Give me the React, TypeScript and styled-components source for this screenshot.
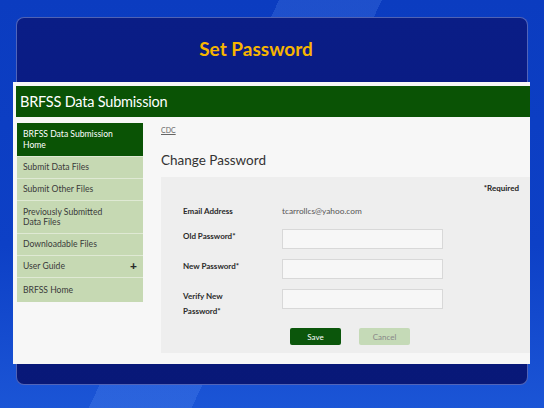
import React from "react";
import styled, { createGlobalStyle } from "styled-components";

const GlobalStyle = createGlobalStyle`
  html, body {
    margin: 0;
    padding: 0;
  }
  body {
    width: 544px;
    height: 408px;
    overflow: hidden;
    font-family: Lato, "Open Sans", "Liberation Sans", sans-serif;
  }
`;

//#region slide
const Slide = styled.div`
  width: 544px;
  height: 408px;
  box-sizing: border-box;
  padding: 17px 16px 23px;
  background:
    linear-gradient(115deg, transparent 0 38%, rgba(120, 170, 255, 0.18) 38% 52%, transparent 52%),
    linear-gradient(180deg, #0b3cc0 0%, #0d40c6 60%, #1b55d6 100%);
`;

const Panel = styled.div`
  height: 368px;
  box-sizing: border-box;
  border-radius: 8px;
  border: 1px solid rgba(140, 160, 230, 0.55);
  background: linear-gradient(180deg, #0a1d86 0%, #0a1a80 60%, #081878 100%);
  display: flex;
  flex-direction: column;
`;

const SlideTitle = styled.h1`
  margin: 0;
  height: 64px;
  display: flex;
  align-items: center;
  justify-content: center;
  padding: 0 32px 4px 0;
  box-sizing: border-box;
  color: #f7b500;
  font-size: 19px;
  font-weight: 700;
`;
//#endregion

//#region captured page
const Shot = styled.div`
  margin-left: -4px;
  margin-right: -3px;
  height: 282px;
  background: #f7f7f7;
  padding: 4px 0 0 3px;
  box-sizing: border-box;
  display: flex;
  flex-direction: column;
`;

const Header = styled.div`
  height: 31px;
  background: #0a5305;
  color: #fff;
  font-size: 14.5px;
  display: flex;
  align-items: center;
  padding-left: 4px;
  letter-spacing: -0.2px;
`;

const Body = styled.div`
  display: flex;
  gap: 18px;
  padding: 6px 0 0 1px;
  flex: 1;
`;

const Sidebar = styled.nav`
  width: 126px;
  align-self: flex-start;
  background: #c6d9b3;
`;

const NavItem = styled.div<{ $active?: boolean; $tall?: boolean }>`
  display: flex;
  justify-content: space-between;
  align-items: center;
  font-size: 8.6px;
  line-height: 10.5px;
  padding: 5px 6px;
  min-height: ${(p) => (p.$tall ? "33px" : "22px")};
  box-sizing: border-box;
  color: ${(p) => (p.$active ? "#fff" : "#3a3a3a")};
  background: ${(p) => (p.$active ? "#0a5305" : "transparent")};
  border-bottom: 1px solid #dfe9d4;
  &:first-child {
    min-height: 34px;
  }
  &:last-child {
    border-bottom: none;
    min-height: 24px;
  }
`;

const NavLabel = styled.span`
  max-width: 96px;
`;

const Plus = styled.span`
  font-size: 12px;
  font-weight: 900;
  color: #2a2a2a;
`;

const Main = styled.div`
  flex: 1;
  display: flex;
  flex-direction: column;
`;

const Crumb = styled.a`
  font-size: 7px;
  color: #666;
  text-decoration: underline;
  margin-top: 3px;
  height: 10px;
`;

const PageTitle = styled.h2`
  margin: 15px 0 0;
  font-size: 13.5px;
  font-weight: 400;
  color: #333;
  line-height: 18px;
`;

const FormBox = styled.div`
  margin-top: 8px;
  height: 176px;
  background: #eeeeee;
  display: flex;
  flex-direction: column;
  padding: 6px 11px 0 22px;
  box-sizing: border-box;
`;

const Required = styled.div`
  align-self: flex-end;
  font-size: 8px;
  font-weight: 700;
  color: #222;
  line-height: 10px;
`;

const Grid = styled.div`
  display: grid;
  grid-template-columns: 99px 161px;
  row-gap: 10px;
  align-items: start;
  margin-top: 11px;
`;

const Label = styled.div`
  font-size: 8px;
  font-weight: 700;
  color: #2a2a2a;
  line-height: 15px;
`;

const Value = styled.div`
  font-size: 8.3px;
  color: #555;
  line-height: 15px;
`;

const Input = styled.div`
  height: 20px;
  background: #f7f7f7;
  border: 1px solid #d8d8d8;
  box-sizing: border-box;
`;

const Buttons = styled.div`
  display: flex;
  gap: 18px;
  margin: 9px 0 0 107px;
`;

const Button = styled.div<{ $primary?: boolean }>`
  width: 51px;
  height: 17px;
  border-radius: 2px;
  display: flex;
  align-items: center;
  justify-content: center;
  font-size: 8px;
  background: ${(p) => (p.$primary ? "#0b560b" : "#c5dab7")};
  color: ${(p) => (p.$primary ? "#fff" : "#888")};
`;
//#endregion

const navItems = [
  { label: "Submit Data Files" },
  { label: "Submit Other Files" },
  { label: "Previously Submitted Data Files", tall: true },
  { label: "Downloadable Files" },
  { label: "User Guide", plus: true },
  { label: "BRFSS Home" },
];

const App = () => {
  return (
    <>
      <GlobalStyle />
      <Slide>
        <Panel>
          <SlideTitle>Set Password</SlideTitle>
          <Shot>
            <Header>BRFSS Data Submission</Header>
            <Body>
              <Sidebar>
                <NavItem $active $tall>
                  BRFSS Data Submission
                  <br />
                  Home
                </NavItem>
                {navItems.map((item) => (
                  <NavItem key={item.label} $tall={item.tall}>
                    <NavLabel>{item.label}</NavLabel>
                    {item.plus && <Plus>+</Plus>}
                  </NavItem>
                ))}
              </Sidebar>
              <Main>
                <Crumb>CDC</Crumb>
                <PageTitle>Change Password</PageTitle>
                <FormBox>
                  <Required>*Required</Required>
                  <Grid>
                    <Label>Email Address</Label>
                    <Value>tcarrollcs@yahoo.com</Value>
                    <Label>Old Password*</Label>
                    <Input />
                    <Label>New Password*</Label>
                    <Input />
                    <Label>
                      Verify New
                      <br />
                      Password*
                    </Label>
                    <Input />
                  </Grid>
                  <Buttons>
                    <Button $primary>Save</Button>
                    <Button>Cancel</Button>
                  </Buttons>
                </FormBox>
              </Main>
            </Body>
          </Shot>
        </Panel>
      </Slide>
    </>
  );
};

export default App;
